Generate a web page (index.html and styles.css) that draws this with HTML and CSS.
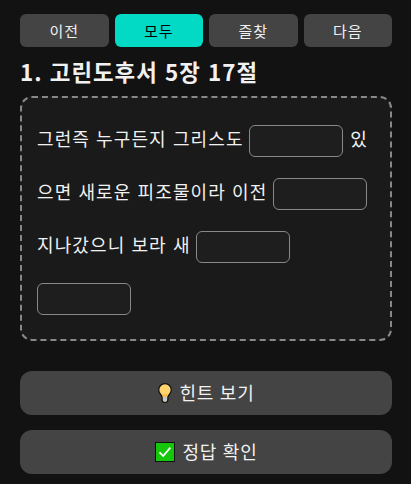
FILE: index.html
```
<!DOCTYPE html>
<html lang="ko">
<head>
    <meta charset="UTF-8">
    <meta name="viewport" content="width=device-width, initial-scale=1.0">
    <title>고린도후서 5장 17절</title>
    <link rel="stylesheet" href="styles.css">
</head>
<body>
    <div class="nav">
        <button>이전</button>
        <button class="active">모두</button>
        <button>즐찾</button>
        <button>다음</button>
    </div>
    <h2 class="title">1. 고린도후서 5장 17절</h2>
    <div class="verse">
        그런즉 누구든지 그리스도 <input type="text" class="blank"> 있<br>으면 새로운 피조물이라 이전 <input type="text" class="blank"><br>
        지나갔으니 보라 새 <input type="text" class="blank"><br>
        <input type="text" class="blank last">
    </div>
    <button class="action hint">
        <svg width="14" height="20" viewBox="0 0 14 20">
            <path d="M7 .7C3.4 .7.7 3.4.7 7c0 2.8 1.7 4 2.8 5.7.5.8.7 1.500.7 2.400v2.100c0 1.300 1.200 2.100 2.800 2.100s2.800-.8 2.800-2.100v-2.100c0-.9.2-1.600.7-2.400C11.600 11 13.300 9.800 13.300 7 13.300 3.400 10.600.7 7 .7z" fill="#ffd36e" stroke="#111" stroke-width="1.3"/>
            <path d="M4.900 13.300h4.200v3.900c0 .9-.9 1.400-2.100 1.400s-2.100-.5-2.100-1.400z" fill="#c8c8c8"/>
            <path d="M4.400 10.800 7 12l2.600-1.200-.6 2.600H5z" fill="#ffb72b"/>
        </svg>
        <span>힌트 보기</span>
    </button>
    <button class="action check">
        <svg width="20" height="20" viewBox="0 0 20 20">
            <rect x=".5" y=".5" width="19" height="19" fill="#16c60c" stroke="#111"/>
            <path d="M4.500 10.400 8.200 14 15.300 5.600" fill="none" stroke="#fff" stroke-width="1.8"/>
        </svg>
        <span>정답 확인</span>
    </button>
</body>
</html>
```
FILE: styles.css
```
* {
    box-sizing: border-box;
}
body {
    margin: 0;
    padding: 14px 19px 10px 20px;
    background: #121212;
    color: #f1f1f1;
    font-family: "Noto Sans CJK KR", sans-serif;
}
button {
    border: none;
    background: #444;
    color: #f1f1f1;
    font-family: inherit;
    cursor: pointer;
}
.nav {
    display: flex;
    gap: 6px;
}
.nav button {
    flex: 1;
    height: 33px;
    padding: 0 0 1px;
    border-radius: 6px;
    font-size: 15px;
    letter-spacing: 1px;
}
.nav .active {
    background: #03dac6;
    color: #000;
}
.title {
    margin: 7px 0 8px;
    font-size: 22.4px;
    line-height: 34px;
    letter-spacing: 1px;
}
.verse {
    height: 245px;
    padding: 14px 15px;
    border: 2px dashed #888;
    border-radius: 12px;
    background: #1a1a1a;
    font-size: 18px;
    line-height: 52.8px;
    letter-spacing: 1.1px;
    white-space: nowrap;
}
.blank {
    width: 94px;
    height: 32px;
    margin: 0 1px 0 -0.6px;
    border: 1px solid #888;
    border-radius: 6px;
    background: #1e1e1e;
    color: #f1f1f1;
    font: inherit;
    line-height: 30px;
    vertical-align: middle;
}
.last {
    margin: 0 0 2px;
}
.action {
    display: flex;
    align-items: center;
    justify-content: center;
    width: 100%;
    height: 44px;
    padding: 0;
    border-radius: 12px;
    font-size: 18px;
    letter-spacing: 0.7px;
}
.action span {
    padding-bottom: 2px;
}
.hint {
    gap: 8px;
    margin-top: 30px;
}
.check {
    gap: 8px;
    margin-top: 15px;
}
```
